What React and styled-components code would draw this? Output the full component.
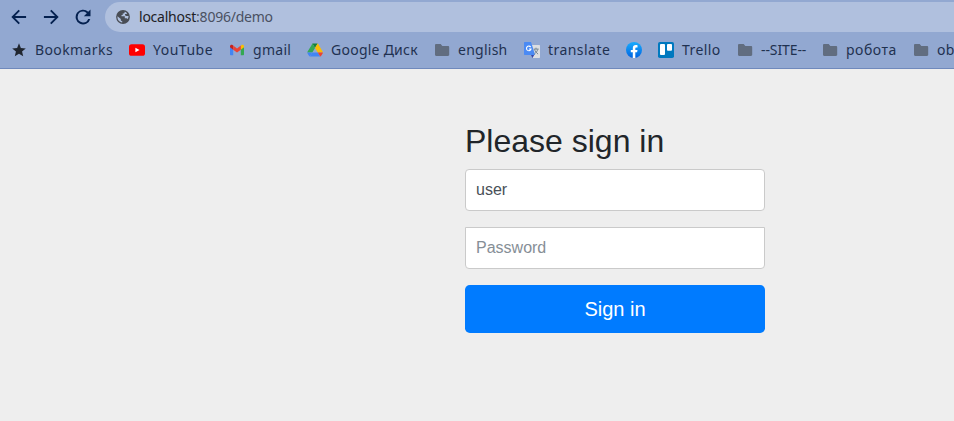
import React from "react";
import styled, { createGlobalStyle } from "styled-components";

const GlobalStyle = createGlobalStyle`
  * { box-sizing: border-box; }
  body { margin: 0; overflow: hidden; background: #eeeeee; }
`;

const Window = styled.div`
  width: 100%;
  height: 100vh;
  overflow: hidden;
  display: flex;
  flex-direction: column;
  background: #eeeeee;
`;

const BrowserChrome = styled.header`
  height: 69px;
  flex: none;
  background: #92a8d1;
  border-bottom: 1px solid #6f89bc;
  font-family: "Noto Sans", "Open Sans", sans-serif;
`;

const Toolbar = styled.div`
  display: flex;
  align-items: center;
  height: 34px;
  padding-left: 9px;
`;

const NavButton = styled.button`
  display: block;
  flex: none;
  width: 20px;
  height: 20px;
  margin-right: 12px;
  padding: 0;
  border: 0;
  background: none;
  color: #04204f;
  svg { display: block; }
`;

const AddressBar = styled.div`
  display: flex;
  align-items: center;
  flex: 1;
  height: 30px;
  padding-left: 10px;
  border-radius: 15px 0 0 15px;
  background: #b0c0de;
`;

const Url = styled.span`
  margin-left: 8px;
  font-size: 14px;
  line-height: 20px;
  letter-spacing: ${(p) => p.$spacing}px;
  color: #202124;
  white-space: nowrap;
`;

const UrlPath = styled.span`
  color: #4a5162;
`;

const BookmarksBar = styled.nav`
  display: flex;
  align-items: center;
  gap: 16px;
  height: 32px;
  padding-left: 11px;
`;

const Bookmark = styled.div`
  display: flex;
  align-items: center;
  flex: none;
  gap: 8px;
  height: 20px;
  svg { display: block; flex: none; }
`;

const BookmarkLabel = styled.span`
  width: ${(p) => p.$width}px;
  font-size: 14px;
  line-height: 20px;
  letter-spacing: ${(p) => p.$spacing}px;
  white-space: nowrap;
  color: #1f3150;
`;

const Page = styled.main`
  flex: 1;
  padding: 53px 0 0 465px;
  font-family: "Liberation Sans", Arial, sans-serif;
`;

const SignInForm = styled.form`
  display: flex;
  flex-direction: column;
  width: 300px;
`;

const Heading = styled.h2`
  margin: 0 0 9px;
  font-size: 32px;
  font-weight: 400;
  line-height: 38px;
  color: #212529;
`;

const Field = styled.input`
  width: 100%;
  height: 42px;
  margin: 0 0 16px;
  padding: 10px;
  border: 1px solid #cacaca;
  border-radius: ${(p) => (p.$squareTop ? "0 0 4px 4px" : "4px")};
  outline: 0;
  background: #ffffff;
  font-family: inherit;
  font-size: 16px;
  line-height: 20px;
  color: #495057;
  &::placeholder { color: #868e96; opacity: 1; }
`;

const SubmitButton = styled.button`
  height: 48px;
  padding: 0;
  border: 0;
  border-radius: 4.8px;
  background: #007bff;
  font-family: inherit;
  font-size: 20px;
  line-height: 30px;
  color: #ffffff;
`;

const NavIcon = ({ d }) => (
  <svg width="20" height="20" viewBox="0 0 24 24" fill="currentColor"><path d={d} /></svg>
);

const BACK = "M20.5 10.700H7.200l5.900-5.800L11.500 3.300 2.800 12l8.700 8.700 1.600-1.600-5.900-5.800h13.300z";
const FORWARD = "M3.500 10.700h13.300l-5.900-5.800 1.600-1.600 8.700 8.700-8.700 8.700-1.600-1.600 5.900-5.800H3.500z";
const RELOAD = "M18.3 5.7A8.9 8.9 0 1 0 20.7 14.3h-2.5A6.5 6.5 0 1 1 12 5.5c1.8 0 3.4.7 4.6 1.9L13 11h8V3z";

const GlobeIcon = () => (
  <svg width="16" height="16" viewBox="0 0 16 16">
    <circle cx="8" cy="8" r="6.9" fill="#494d55" />
    <path d="M6.300 2.700h3.400c-.1 1.500-.7 1.900-2 1.900v1.300H6.500v1.300h3.300v2h1.300c.7 0 1.200.4 1.300 1 .8-.9 1.200-2 1.100-3.300h-2.200c-.8 0-1.300-.5-1.300-1.300v-.7h1.400c.4 0 .6-.2.600-.6-.6-.7-1.400-1.200-2.300-1.500H6.300z" fill="#b0c0de" />
    <path d="M2.500 7.200 5.800 10v.700c0 .8.500 1.300 1.400 1.300v1.500C4.300 13.100 2.100 10.600 2.500 7.200z" fill="#b0c0de" />
  </svg>
);

const StarIcon = () => (
  <svg width="16" height="16" viewBox="0 0 24 24" fill="#202630">
    <path d="M12 17.8 18.300 21.500l-1.700-7.100 5.600-4.800-7.400-.7L12 2 9.200 8.900l-7.400.7 5.600 4.800-1.700 7.100z" />
  </svg>
);

const YouTubeIcon = () => (
  <svg width="16" height="16" viewBox="0 0 16 16">
    <rect y="2.200" width="16" height="11.600" rx="2.600" fill="#ff0000" />
    <path d="m6.400 5.700 4.100 2.300-4.100 2.300z" fill="#ffffff" />
  </svg>
);

const GmailIcon = () => (
  <svg width="16" height="16" viewBox="0 0 16 16">
    <path d="M1 5v7.300c0 .6.4 1 1 1h2.200V6.600z" fill="#4285f4" />
    <path d="M11.800 6.600v6.700H14c.6 0 1-.4 1-1V5z" fill="#34a853" />
    <path d="M11.800 3.700v4l3.200-2.400V4.200c0-1.400-1.500-2-2.500-1.200z" fill="#fbbc04" />
    <path d="m4.200 7.700-3.200-2.400V4.200C1 2.800 2.500 2.200 3.500 3l.7.500z" fill="#c5221f" />
    <path d="M4.200 7.700V3.500L8 6.400l3.800-2.900v4.200L8 10.600z" fill="#ea4335" />
  </svg>
);

const DriveIcon = () => (
  <svg width="16" height="16" viewBox="0 0 16 16">
    <path d="M5.400 1.500h5.200L8 6z" fill="#188038" />
    <path d="M5.400 1.500 8 6l-2.700 4.500H.4c0-.5.1-.9.4-1.300l4-6.500c.1-.5.300-.9.600-1.200z" fill="#34a853" />
    <path d="M10.600 1.500 8 6l2.700 4.500h5.100c0-.4-.1-.8-.4-1.200l-3.900-6.900c-.2-.4-.5-.7-.900-.9z" fill="#fbbc04" />
    <path d="M.4 10.400h4.900l-2.500 4.100c-.5-.2-.7-.6-1-1L.7 11.700c-.2-.4-.3-.8-.3-1.300z" fill="#4285f4" />
    <path d="M5.300 10.400h5.400l2.500 4.100H2.800z" fill="#4285f4" />
    <path d="M10.700 10.400h5.100c0 .5-.1.9-.3 1.300l-1.300 2.100c-.200.3-.5.600-1 .7z" fill="#ea4335" />
  </svg>
);

const FolderIcon = () => (
  <svg width="16" height="16" viewBox="0 0 16 16">
    <path d="M2.200 2h4.500l1.600 2H14c.7 0 1.200.5 1.200 1.200v7.600c0 .7-.5 1.200-1.200 1.200H2.200C1.500 14 1 13.500 1 12.800V3.200C1 2.500 1.500 2 2.200 2z" fill="#616d80" />
  </svg>
);

const TranslateIcon = () => (
  <svg width="16" height="16" viewBox="0 0 16 16">
    <path d="M6 3h9c.6 0 1 .4 1 1v11c0 .6-.4 1-1 1H9z" fill="#dcdee2" />
    <path d="M7 13h3.200L8.500 16z" fill="#3747a8" />
    <path d="M1 0h6l4.200 13H1c-.6 0-1-.4-1-1V1c0-.6.4-1 1-1z" fill="#4a8af4" />
    <path d="M6.700 5.100A2.300 2.300 0 1 0 7 7H4.900" fill="none" stroke="#ffffff" strokeWidth="1.100" />
    <path d="M9.700 7.100h5M12 5.700v1.400M10.500 7.400c.7 2 2 3.500 3.600 4.700M13.700 7.400c-.5 2-1.700 3.500-3.300 4.700" fill="none" stroke="#758591" strokeWidth="1" />
  </svg>
);

const FacebookIcon = () => (
  <svg width="16" height="16" viewBox="0 0 16 16">
    <defs>
      <linearGradient id="facebookBlue" x1="0" y1="0" x2="0" y2="1">
        <stop stopColor="#18acfe" /><stop offset="1" stopColor="#0163e0" />
      </linearGradient>
    </defs>
    <circle cx="8" cy="8" r="8" fill="url(#facebookBlue)" />
    <path d="m11.100 10.300.4-2.300H9.300V6.500c0-.7.300-1.100 1.200-1.100h1V3.300c-.6-.1-1.200-.2-1.700-.2-1.900 0-3 1.100-3 3.100V8h-2v2.300h2v5.600c.8.100 1.700.1 2.500 0v-5.600z" fill="#ffffff" />
  </svg>
);

const TrelloIcon = () => (
  <svg width="16" height="16" viewBox="0 0 16 16">
    <rect width="16" height="16" rx="1.800" fill="#0079bf" />
    <rect x="2" y="2" width="5" height="11" rx=".9" fill="#ffffff" />
    <rect x="9" y="2" width="5" height="6.700" rx=".9" fill="#ffffff" />
  </svg>
);

const bookmarks = [
  { Icon: StarIcon, label: "Bookmarks", width: 78, spacing: 0.4 },
  { Icon: YouTubeIcon, label: "YouTube", width: 60, spacing: 0.5 },
  { Icon: GmailIcon, label: "gmail", width: 38, spacing: 0.3 },
  { Icon: DriveIcon, label: "Google Диск", width: 87, spacing: 0.25 },
  { Icon: FolderIcon, label: "english", width: 50, spacing: 0.25 },
  { Icon: TranslateIcon, label: "translate", width: 62, spacing: 0.45 },
  { Icon: FacebookIcon },
  { Icon: TrelloIcon, label: "Trello", width: 39, spacing: 0.4 },
  { Icon: FolderIcon, label: "--SITE--", width: 45, spacing: -0.1 },
  { Icon: FolderIcon, label: "робота", width: 51, spacing: 0.55 },
  { Icon: FolderIcon, label: "ob", width: 20, spacing: 0.3 },
];

export default function App() {
  return (
    <Window>
      <GlobalStyle />
      <BrowserChrome>
        <Toolbar>
          <NavButton aria-label="Back"><NavIcon d={BACK} /></NavButton>
          <NavButton aria-label="Forward"><NavIcon d={FORWARD} /></NavButton>
          <NavButton aria-label="Reload"><NavIcon d={RELOAD} /></NavButton>
          <AddressBar>
            <GlobeIcon />
            <Url $spacing={-0.23}>localhost<UrlPath>:8096/demo</UrlPath></Url>
          </AddressBar>
        </Toolbar>
        <BookmarksBar>
          {bookmarks.map(({ Icon, label, width, spacing }, i) => (
            <Bookmark key={i}>
              <Icon />
              {label && <BookmarkLabel $width={width} $spacing={spacing}>{label}</BookmarkLabel>}
            </Bookmark>
          ))}
        </BookmarksBar>
      </BrowserChrome>
      <Page>
        <SignInForm>
          <Heading>Please sign in</Heading>
          <Field type="text" aria-label="Username" defaultValue="user" />
          <Field type="password" placeholder="Password" $squareTop />
          <SubmitButton type="button">Sign in</SubmitButton>
        </SignInForm>
      </Page>
    </Window>
  );
}
